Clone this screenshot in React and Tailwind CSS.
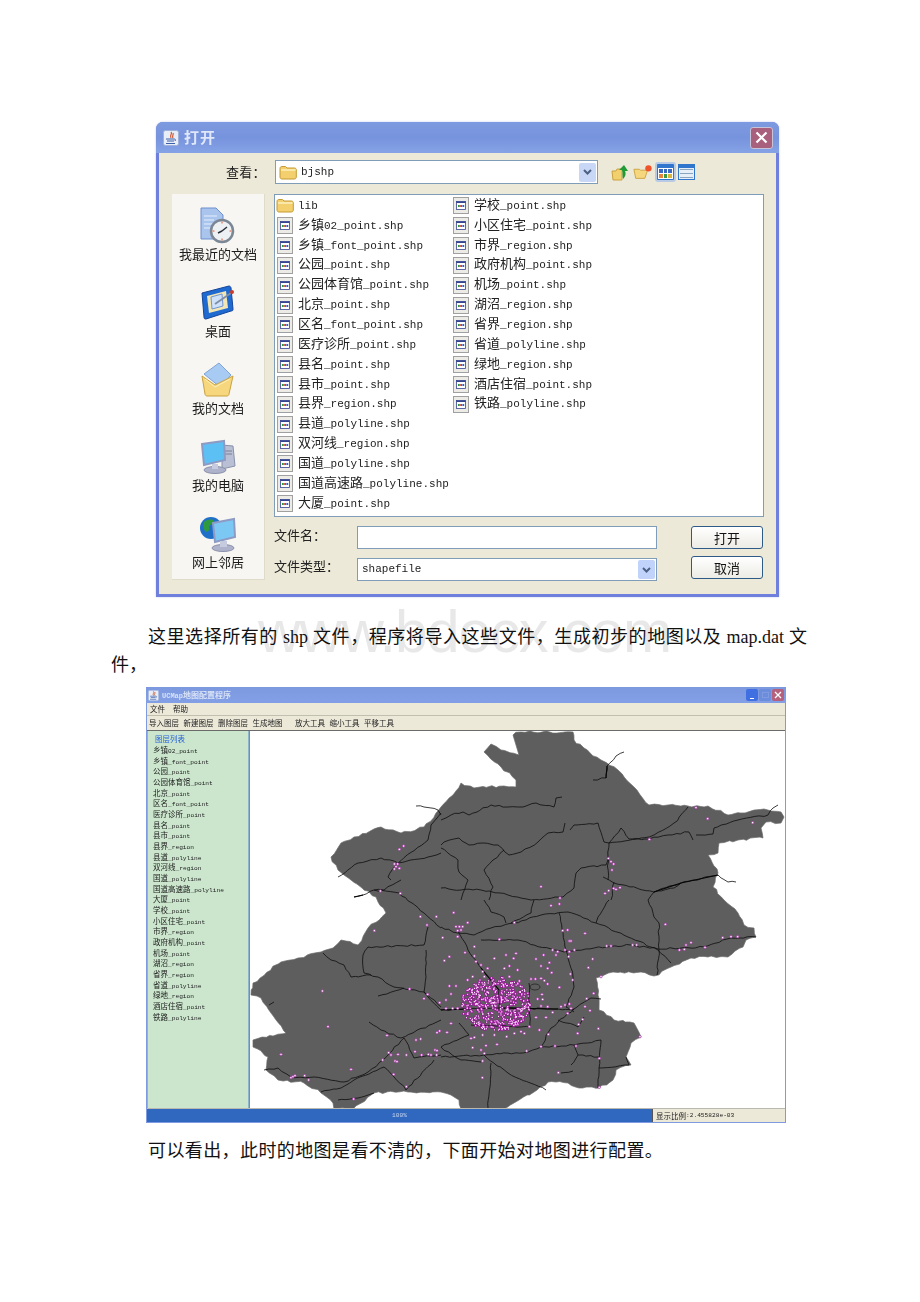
import React from 'react'

const leftFiles = ['乡镇02_point.shp', '乡镇_font_point.shp', '公园_point.shp', '公园体育馆_point.shp', '北京_point.shp', '区名_font_point.shp', '医疗诊所_point.shp', '县名_point.shp', '县市_point.shp', '县界_region.shp', '县道_polyline.shp', '双河线_region.shp', '国道_polyline.shp', '国道高速路_polyline.shp', '大厦_point.shp']
const rightFiles = ['学校_point.shp', '小区住宅_point.shp', '市界_region.shp', '政府机构_point.shp', '机场_point.shp', '湖沼_region.shp', '省界_region.shp', '省道_polyline.shp', '绿地_region.shp', '酒店住宿_point.shp', '铁路_polyline.shp']
const layers = ['乡镇02_point', '乡镇_font_point', '公园_point', '公园体育馆_point', '北京_point', '区名_font_point', '医疗诊所_point', '县名_point', '县市_point', '县界_region', '县道_polyline', '双河线_region', '国道_polyline', '国道高速路_polyline', '大厦_point', '学校_point', '小区住宅_point', '市界_region', '政府机构_point', '机场_point', '湖沼_region', '省界_region', '省道_polyline', '绿地_region', '酒店住宿_point', '铁路_polyline']

// small seeded generator so the map is the same on every load
let seed = 12345
const rand = () => {
  seed = (seed * 1664525 + 1013904223) % 4294967296
  return seed / 4294967296
}

// breaks long straight segments up so borders and roads look hand digitised
const roughen = (points, amp, step) => {
  const pts = points.split(' ').map((p) => p.split(',').map(Number))
  const out = []
  pts.forEach(([x, y], i) => {
    out.push(`${x},${y}`)
    const next = pts[i + 1]
    if (!next) return
    const n = Math.floor(Math.hypot(next[0] - x, next[1] - y) / step)
    for (let k = 1; k < n; k++) {
      const t = k / n
      const px = x + (next[0] - x) * t + (rand() - 0.5) * amp
      const py = y + (next[1] - y) * t + (rand() - 0.5) * amp
      out.push(`${px.toFixed(1)},${py.toFixed(1)}`)
    }
  })
  return out.join(' ')
}

// map outline, page coordinates
const outline = roughen('512,735 520,732 572,732 573,740 583,748 600,760 617,770 633,787 648,805 667,805 687,806 707,806 727,815 740,813 763,809 780,812 783,817 780,823 765,822 760,828 762,838 737,840 718,843 717,853 707,855 717,873 712,887 723,900 737,913 743,925 753,928 755,937 745,940 742,947 727,957 707,957 690,958 670,967 653,976 640,972 612,972 595,978 597,995 598,1010 613,1020 633,1023 640,1037 630,1043 625,1057 630,1065 615,1070 612,1080 598,1088 578,1088 567,1083 547,1082 533,1092 518,1100 502,1109 460,1109 458,1100 450,1095 440,1092 407,1092 373,1093 352,1109 333,1109 332,1103 320,1093 303,1083 277,1080 265,1070 267,1057 252,1047 252,1040 285,1033 273,1017 260,998 250,995 252,983 280,962 297,958 320,952 332,948 340,940 357,945 367,928 385,913 375,897 350,880 337,870 330,857 340,843 353,837 380,827 400,833 423,827 440,807 452,795 460,783 473,788 503,786 515,787 515,780 500,767 483,752 490,744 500,750 518,755', 2.4, 4)

const roads = [
  '440,820 450,815 462,812 468,815 490,805 507,807 522,807 535,803 553,807 555,798 561,797',
  '564,823 562,832 547,833 537,842 520,852 508,855 497,845 482,843 468,845 458,838 443,842 440,845',
  '569,830 573,825 597,823 603,842 608,843 607,857 607,880',
  '608,843 620,828 628,839 648,839 667,835 688,832 692,840',
  '608,843 640,838 653,835 673,823 687,807',
  '695,835 712,834 713,828 737,820 767,815 772,808 777,805',
  '592,780 605,778 606,766 615,756 623,752',
  '440,848 457,860 458,872 467,880 462,893 460,900',
  '503,850 492,860 483,870 492,887 488,900',
  '607,857 605,865 580,868 575,873 573,888 562,897 530,900',
  '602,877 613,883 653,892 680,883 717,875 727,882 735,882',
  '647,900 653,892 673,888 680,883',
  '613,882 610,900',
  '440,888 460,890 480,890 507,895 530,900',
  '440,927 457,933 473,935 490,928 513,923 540,915 567,912 595,923 627,937 657,950 670,963',
  '480,940 517,940 533,945 563,952 593,948 630,945 657,949 703,947 730,938 755,937',
  '558,913 565,950 572,977 573,987 565,1007 573,1012',
  '595,923 597,917 608,900',
  '647,900 653,917 658,923 658,950 656,975',
  '440,1010 497,1008 557,1009 573,1009 590,998 600,999',
  '573,1009 550,1028 540,1047 527,1052 483,1055 440,1057',
  '457,930 467,950 480,968 498,990 498,1010',
  '483,1055 507,1073 545,1090',
  '490,1063 487,1108',
  '600,1040 573,1045 540,1047',
  '600,1040 598,1068 597,1088',
  '598,1068 628,1065 625,1057',
  '577,1055 598,1057',
  '573,1045 577,1055 570,1065',
  '557,1020 577,1027 583,1017',
  '458,1023 468,1035 440,1047 460,1060 480,1062',
  '528,983 529,1027 470,1025',
  '560,1073 572,1071',
  '483,900 490,912 503,917 505,923',
  '533,900 530,913 510,923',
  '353,897 362,895 373,890 398,893 423,913 440,928',
  '400,880 383,890 373,890',
  '427,927 423,945 367,947 362,955 363,973 377,977 393,987 423,992 440,1007',
  '322,953 330,960 343,965 350,977 370,975',
  '377,996 403,988',
  '425,950 425,977 423,992 427,997 440,1010',
  '263,1070 277,1068 290,1077 313,1077 343,1082 367,1072 382,1060 403,1038 413,1058 440,1055',
  '368,1022 380,1030 400,1038 440,1020',
  '320,1092 340,1088 353,1080 383,1067 393,1077 405,1090 433,1060',
  '337,1100 357,1098 373,1093',
  '268,1005 273,1002',
  '337,877 357,863 380,858 397,863 427,857 440,853',
  '397,863 427,840 430,825 440,813',
  '397,863 387,877 390,880',
  '415,806 423,807 437,810 440,815',
].map((r) => roughen(r, 1.6, 4))
const thickRoads = ['353,897 362,895', '440,1010 470,1009', '498,1008 557,1009', '606,766 605,778', '653,892 680,883 717,875', '480,968 498,990']

// hand placed dots, grouped by the crop they were read from
const shift = (dx, dy, pts) => pts.map(([x, y]) => [x / 3 + dx, y / 3 + dy])
const looseDots = [
  ...shift(440, 680, [[765, 383], [800, 416], [935, 428], [625, 478], [502, 535], [510, 545], [518, 552], [513, 570], [300, 620], [357, 654], [492, 640], [503, 632], [518, 625], [525, 628], [537, 623]]),
  ...shift(140, 680, [[775, 508], [788, 498], [760, 552], [770, 552], [765, 560], [775, 565], [760, 567]]),
  ...shift(140, 880, [[718, 33], [778, 40], [838, 110], [886, 110], [858, 135], [700, 152], [544, 333], [561, 440], [738, 466], [825, 480], [839, 477], [420, 523], [630, 568], [743, 518], [750, 525], [771, 523], [796, 525], [822, 515], [842, 525], [862, 523], [870, 525], [882, 510], [888, 512], [887, 525], [762, 543], [768, 545], [725, 540], [758, 583], [796, 620], [638, 657], [450, 593], [456, 590], [462, 587], [491, 587], [503, 600], [849, 356], [860, 343], [896, 368], [888, 458], [896, 453], [806, 327]]),
  ...shift(440, 900, [[38, 38], [80, 68], [45, 80], [55, 80], [65, 80], [50, 92], [60, 90], [50, 110], [5, 113], [175, 118], [220, 68], [330, 17], [355, 12], [673, 73], [365, 92], [380, 90], [432, 100], [385, 123], [390, 123], [845, 113], [870, 110], [890, 110], [750, 128], [735, 135], [730, 148], [715, 150], [792, 142], [575, 135], [587, 135], [497, 138], [510, 138], [335, 150], [350, 155], [372, 150], [385, 155], [400, 150], [383, 170], [345, 165], [100, 140], [72, 158], [100, 168], [10, 182], [25, 170], [195, 165], [225, 160], [160, 175], [218, 175], [285, 177], [308, 165], [455, 177], [442, 203], [105, 185], [120, 195], [190, 205], [205, 198], [230, 210], [300, 198], [325, 188], [320, 205], [332, 218], [388, 222], [395, 240], [270, 237], [283, 237], [300, 235], [310, 242], [320, 252], [355, 262], [480, 230], [458, 280], [437, 296], [303, 283], [290, 297], [305, 298], [300, 318], [320, 320], [335, 337], [360, 320], [372, 315], [385, 312], [390, 325], [380, 340], [432, 320], [447, 332], [425, 358], [413, 373], [472, 386], [410, 400], [315, 352], [285, 352], [295, 390], [265, 380], [322, 403], [300, 440], [342, 438], [405, 438], [257, 453], [135, 437], [120, 450], [130, 460], [125, 483], [95, 443], [168, 433], [197, 410], [160, 405], [125, 405], [100, 412], [90, 415], [220, 400], [250, 400], [240, 395], [475, 475], [352, 518], [124, 533], [475, 562], [597, 410], [30, 370], [18, 397], [15, 300], [45, 258], [25, 258], [30, 282], [80, 240], [140, 205], [125, 215], [130, 230], [95, 230], [205, 230], [235, 243], [15, 325], [35, 325], [50, 325]]),
]

// central urban cluster
const clusterDots = []
for (let i = 0; i < 440; i++) {
  const a = rand() * Math.PI * 2
  const r = Math.sqrt(rand())
  clusterDots.push([495 + Math.cos(a) * r * 35, 1004 + Math.sin(a) * r * 27])
}

function Mixed({ text, latin }) {
  const parts = text.match(/[\x00-\x7f]+|[^\x00-\x7f]+/g)
  return parts.map((p, i) =>
    /^[\x00-\x7f]/.test(p) ? (
      <span key={i} className={latin}>{p}</span>
    ) : (
      <span key={i}>{p}</span>
    )
  )
}

function JavaIcon({ size = 16 }) {
  return (
    <svg width={size} height={size} viewBox="0 0 16 16">
      <rect x="0.5" y="0.5" width="15" height="15" rx="2" fill="#e8eef8" stroke="#9fb0d8" />
      <path d="M8 2c2 2-2 3 0 6M10 3c1 2-1.5 3 0 5" stroke="#d0552b" strokeWidth="1.2" fill="none" />
      <path d="M3 9h8c1 0 2 .5 1 2M4 11h7M3 13.5h9" stroke="#3b5fa8" strokeWidth="1" fill="none" />
    </svg>
  )
}

function FolderIcon() {
  return (
    <svg width="18" height="15" viewBox="0 0 18 15" className="shrink-0">
      <path d="M1 3.5C1 2 2 1.5 3 1.5h3.5L8 3h7.5c1 0 1.8.7 1.8 1.8V12c0 1.2-.8 2-2 2H3c-1.200 0-2-.8-2-2z" fill="#f3cf6d" stroke="#c49a35" />
      <path d="M2 5h14.500" stroke="#fdf0bd" strokeWidth="1.500" />
    </svg>
  )
}

function FileIcon() {
  return (
    <svg width="16" height="17" viewBox="0 0 16 17" className="shrink-0">
      <rect x="0.500" y="0.500" width="15" height="16" fill="#ecebe6" stroke="#a0a0a0" />
      <rect x="3.500" y="4.500" width="9" height="8" fill="#ffffff" stroke="#33458f" strokeWidth="0.800" />
      <rect x="3.500" y="4.500" width="9" height="1.500" fill="#33458f" />
      <rect x="5" y="8" width="1.800" height="2" fill="#2b9a3e" />
      <rect x="7.200" y="8" width="1.800" height="2" fill="#d33a2c" />
      <rect x="9.400" y="8" width="1.800" height="2" fill="#2b5fc9" />
    </svg>
  )
}

function RecentIcon() {
  return (
    <svg width="36" height="38" viewBox="0 0 36 38">
      <path d="M1 1h15l7 7v24H1z" fill="#a9c5ee" stroke="#6d8fce" />
      <path d="M4 9h13M4 13h10M4 17h9M4 21h9" stroke="#e6effb" />
      <circle cx="22" cy="24" r="11" fill="#eef1f4" stroke="#7b8794" strokeWidth="2.500" />
      <path d="M22 24l5-4M22 24l-4 2" stroke="#2a2f38" strokeWidth="1.500" />
      <path d="M22 14.500v2M22 31.500v2M12.500 24h2M29.500 24h2" stroke="#e5562a" />
    </svg>
  )
}

function DesktopIcon() {
  return (
    <svg width="36" height="36" viewBox="0 0 36 36">
      <path d="M2 8l27-7c1 0 2 1 2 2l2 21c0 1 0 2-2 2L6 34c-1 0-2 0-2-2z" fill="#1f6ad0" stroke="#14459b" />
      <path d="M7 11l19-5 2 17-19 5z" fill="#f3e6b5" />
      <path d="M11 12l11-3 1 12-11 3z" fill="#cfe2fa" stroke="#6f95d3" />
      <path d="M15 19l16-11" stroke="#7d8ea8" strokeWidth="1.800" />
      <circle cx="32" cy="7" r="2" fill="#c93a2b" />
    </svg>
  )
}

function DocsIcon() {
  return (
    <svg width="34" height="36" viewBox="0 0 34 36">
      <path d="M3 12L18 1l12 12-11 12z" fill="#a8cbf3" stroke="#7fa4d8" />
      <path d="M1 14l13 9 18-9-4 18c0 1-1 2-2 2H6c-1 0-2-1-2-2z" fill="#f6d77e" stroke="#c9a23f" />
      <path d="M4 17l10 8 15-8" stroke="#fdf0bd" fill="none" />
    </svg>
  )
}

function ComputerIcon() {
  return (
    <svg width="36" height="36" viewBox="0 0 36 36">
      <path d="M22 6l11 1 2 20-13 3z" fill="#b9bfd4" stroke="#8a90aa" />
      <path d="M25 12h7M25 15h7" stroke="#7a8098" />
      <path d="M2 5l22-3 1 19-21 5z" fill="#5dc0f5" stroke="#8d9bc4" strokeWidth="2" />
      <ellipse cx="15" cy="31" rx="11" ry="3.500" fill="#aeb3cb" stroke="#8a90aa" />
      <path d="M12 25h6v5h-6z" fill="#c7cbe0" />
    </svg>
  )
}

function NetworkIcon() {
  return (
    <svg width="36" height="36" viewBox="0 0 36 36">
      <circle cx="11" cy="12" r="11" fill="#1f6fc9" />
      <path d="M4 6c4-3 8-3 10-1-1 4-4 3-5 6 2 3-2 6-4 4-2-3-2-6-1-9zM15 12c3 0 4 3 2 6-2 1-3-3-2-6z" fill="#2f9a3d" />
      <path d="M13 7l21-4 1 18-20 5z" fill="#7bc8f5" stroke="#8d9bc4" strokeWidth="2" />
      <ellipse cx="23" cy="32" rx="11" ry="3.500" fill="#aeb3cb" stroke="#8a90aa" />
      <path d="M20 25h7v6h-7z" fill="#c7cbe0" />
    </svg>
  )
}

function SideItem({ icon, label }) {
  return (
    <div className="h-[77px] flex flex-col items-center pt-[13px]">
      <div className="h-[38px] flex items-center">{icon}</div>
      <div className="mt-[1px] text-[13px] leading-[16px] text-[#1c1c1c]">{label}</div>
    </div>
  )
}

function FileRow({ name }) {
  return (
    <div className="h-[19.850px] flex items-center gap-[5px]">
      <FileIcon />
      <div className="whitespace-nowrap text-[13px] leading-[16px] -mt-[2px] text-[#222222]">
        <Mixed text={name} latin="font-['Liberation_Mono'] text-[11px]" />
      </div>
    </div>
  )
}

function Chevron({ faded }) {
  return (
    <div className={`w-[17px] h-[19px] rounded-[2px] flex items-center justify-center ${faded ? 'bg-[#c1d3fb]' : 'bg-[#c8d7f5]'}`}>
      <svg width="9" height="6" viewBox="0 0 9 6">
        <path d="M1 1l3.500 3.500L8 1" stroke="#4d6185" strokeWidth="2" fill="none" />
      </svg>
    </div>
  )
}

function OpenDialog() {
  return (
    <div className="ml-[156px] w-[623px] h-[475px] rounded-t-[7px] bg-[#6f7fdc] px-[3px] pb-[3px] flex flex-col shadow-[0_0_2px_#b8c0e8] blur-[0.3px]">
      <div className="h-[31px] shrink-0 -mx-[3px] rounded-t-[7px] bg-gradient-to-b from-[#7d9be0] via-[#7693dd] to-[#86a3e6] flex items-center pl-[7px] pr-[6px] gap-[5px]">
        <JavaIcon size={16} />
        <div className="text-[15px] font-bold text-[#dfe7f8] tracking-[1px]">打开</div>
        <div className="ml-auto w-[23px] h-[22px] rounded-[3px] border border-[#c7c3d8] bg-[#a8607c] flex items-center justify-center">
          <svg width="13" height="13" viewBox="0 0 13 13">
            <path d="M1.500 1.500l10 10M11.500 1.500l-10 10" stroke="#ffffff" strokeWidth="2.200" />
          </svg>
        </div>
      </div>

      <div className="flex-1 bg-[#ece9d8] px-[12px] pt-[7px] text-[#222222]">
        <div className="flex items-center h-[24px]">
          <div className="w-[104px] pl-[55px] text-[13px] tracking-[0.300px] whitespace-nowrap">查看：</div>
          <div className="w-[323px] h-[24px] bg-white border border-[#7f9db9] flex items-center pl-[3px] pr-[1px]">
            <FolderIcon />
            <span className="ml-[4px] font-['Liberation_Mono'] text-[11px]">bjshp</span>
            <div className="ml-auto"><Chevron /></div>
          </div>
          <div className="ml-[13px] flex items-center gap-[2px]">
            <svg width="20" height="19" viewBox="0 0 20 19">
              <path d="M1 8h4l1-2h5v11H2z" fill="#f3d06e" stroke="#c9a23f" />
              <path d="M12 16c3-3 3-6 2-8h3l-4-6-5 5h3c1 3 0 6 1 9z" fill="#1f9a35" />
            </svg>
            <svg width="20" height="18" viewBox="0 0 22 18">
              <path d="M1 6h6l1 1h8l-3 9H3z" fill="#f6d77e" stroke="#c9a23f" />
              <circle cx="17" cy="5" r="3.500" fill="#f0532a" />
            </svg>
            <div className="w-[21px] h-[20px] rounded-[3px] border-2 border-[#b9cbe4] bg-[#2f76cc] flex flex-col p-[1px]">
              <div className="h-[3px]" />
              <div className="flex-1 bg-white grid grid-cols-3 gap-[1px] p-[1px]">
                <div className="bg-[#3b6cc4]" /><div className="bg-[#3b6cc4]" /><div className="bg-[#3b6cc4]" />
                <div className="bg-[#e8853a]" /><div className="bg-[#3a9a4a]" /><div className="bg-[#d9b53a]" />
              </div>
            </div>
            <div className="w-[17px] h-[16px] bg-[#2f76cc] flex flex-col p-[1px]">
              <div className="h-[3px]" />
              <div className="flex-1 bg-[#e6eef8] flex flex-col justify-around px-[1px]">
                <div className="h-px bg-[#8ea3bd]" /><div className="h-px bg-[#8ea3bd]" /><div className="h-px bg-[#8ea3bd]" />
              </div>
            </div>
          </div>
        </div>

        <div className="flex mt-[10px]">
          <div className="w-[93px] h-[386px] ml-[1px] bg-[#f7f6f2] border-r border-b border-[#dedbc9]">
            <SideItem icon={<RecentIcon />} label="我最近的文档" />
            <SideItem icon={<DesktopIcon />} label="桌面" />
            <SideItem icon={<DocsIcon />} label="我的文档" />
            <SideItem icon={<ComputerIcon />} label="我的电脑" />
            <SideItem icon={<NetworkIcon />} label="网上邻居" />
          </div>

          <div className="ml-[9px] w-[490px]">
            <div className="h-[323px] bg-white border border-[#7f9db9] pt-[1px] pl-[2px] flex">
              <div className="w-[176px]">
                <div className="h-[19.850px] flex items-center gap-[4px] -ml-[1px]">
                  <FolderIcon />
                  <span className="font-['Liberation_Mono'] text-[11px]">lib</span>
                </div>
                {leftFiles.map((f) => <FileRow key={f} name={f} />)}
              </div>
              <div>
                {rightFiles.map((f) => <FileRow key={f} name={f} />)}
              </div>
            </div>

            <div className="flex items-center mt-[9px] h-[23px]">
              <div className="w-[83px] text-[13px] whitespace-nowrap -mt-[5px]">文件名：</div>
              <div className="w-[300px] h-[23px] bg-white border border-[#7f9db9]" />
              <button className="ml-[34px] w-[72px] h-[23px] rounded-[3px] border border-[#2e5a88] bg-gradient-to-b from-white to-[#ecebe4] text-[13px] text-[#111111]">打开</button>
            </div>
            <div className="flex items-center mt-[9px] h-[23px]">
              <div className="w-[83px] text-[13px] whitespace-nowrap -mt-[8px]">文件类型：</div>
              <div className="w-[300px] h-[23px] bg-white border border-[#7f9db9] flex items-center pl-[4px] pr-[1px]">
                <span className="font-['Liberation_Mono'] text-[11px]">shapefile</span>
                <div className="ml-auto"><Chevron faded /></div>
              </div>
              <button className="ml-[34px] w-[72px] h-[23px] -mt-[4px] rounded-[3px] border border-[#2e5a88] bg-gradient-to-b from-white to-[#ecebe4] text-[13px] text-[#111111]">取消</button>
            </div>
          </div>
        </div>
      </div>
    </div>
  )
}

function BeijingMap() {
  return (
    <svg viewBox="249 731 536 378" width="536" height="378" className="block">
      <polygon points={outline} fill="#5e5e5e" stroke="#6a6a6a" strokeWidth="0.700" strokeLinejoin="round" />
      <g fill="none" stroke="#0c0c0c" strokeWidth="0.800" strokeLinejoin="round">
        {roads.map((r, i) => <polyline key={i} points={r} />)}
      </g>
      <g fill="none" stroke="#050505" strokeWidth="1.100">
        {thickRoads.map((r) => <polyline key={r} points={r} />)}
      </g>
      <ellipse cx="534" cy="987" rx="5" ry="3" fill="none" stroke="#111111" strokeWidth="0.600" />
      <g fill="#9a129a">
        {clusterDots.map(([x, y], i) => <circle key={i} cx={x} cy={y} r="1.500" />)}
      </g>
      <g fill="#ffe8ff">
        {clusterDots.map(([x, y], i) => <rect key={i} x={x - 0.600} y={y - 0.600} width="1.200" height="1.200" />)}
      </g>
      <g fill="#fff6ff" stroke="#a428a4" strokeWidth="0.700">
        {looseDots.map(([x, y], i) => <circle key={i} cx={x} cy={y} r="1.200" />)}
      </g>
    </svg>
  )
}

const tiny = "font-['Liberation_Mono'] text-[6.200px]"

function ConfigWindow() {
  return (
    <div className="ml-[146px] w-[640px] h-[436px] rounded-t-[3px] bg-[#7f9ae0] pb-px flex flex-col text-[7.500px] text-[#222222] blur-[0.4px]">
      <div className="h-[16px] shrink-0 bg-gradient-to-b from-[#7c98de] to-[#83a0e6] flex items-center pl-[2px] pr-[2px] gap-[3px]">
        <JavaIcon size={11} />
        <div className="text-[#d8e2f6] whitespace-nowrap text-[8px] font-semibold">
          <Mixed text="UCMap地图配置程序" latin="font-['Liberation_Mono'] text-[7px]" />
        </div>
        <div className="ml-auto flex gap-[1px]">
          <div className="w-[12px] h-[12px] rounded-[2px] bg-[#3f6fe0] flex items-end justify-center pb-[2px]">
            <div className="w-[4px] h-[1.500px] bg-white" />
          </div>
          <div className="w-[12px] h-[12px] rounded-[2px] bg-[#6c8cdc] flex items-center justify-center">
            <div className="w-[7px] h-[6px] border border-[#7f9ae0]" />
          </div>
          <div className="w-[12px] h-[12px] rounded-[2px] bg-[#b5607c] flex items-center justify-center">
            <svg width="8" height="8" viewBox="0 0 8 8">
              <path d="M1 1l6 6M7 1l-6 6" stroke="#ffffff" strokeWidth="1.300" />
            </svg>
          </div>
        </div>
      </div>

      <div className="h-[13px] shrink-0 bg-[#ece9d8] border-b border-[#c0bfb0] flex items-center pl-[3px] gap-[8px] mx-px">
        <span>文件</span>
        <span>帮助</span>
      </div>
      <div className="h-[15px] shrink-0 bg-[#ece9d8] border-b border-[#6a6a6a] flex items-center pl-[2px] gap-[4.500px] mx-px">
        <span>导入图层</span>
        <span>新建图层</span>
        <span>删除图层</span>
        <span>生成地图</span>
        <span className="ml-[8px]">放大工具</span>
        <span>缩小工具</span>
        <span>平移工具</span>
      </div>

      <div className="flex-1 flex mx-px min-h-0">
        <div className="w-[102px] shrink-0 bg-[#cbe6cd] border-x border-[#8fb6c8] pl-[5px] pt-[2px]">
          <div className="text-[#2a62d8] pl-[2px] h-[11px] leading-[11px] mb-[1px]">图层列表</div>
          {layers.map((l) => (
            <div key={l} className="h-[10.680px] leading-[10.680px] whitespace-nowrap">
              <Mixed text={l} latin={tiny} />
            </div>
          ))}
        </div>
        <div className="flex-1 bg-white border-l border-[#8a8a8a] overflow-hidden">
          <BeijingMap />
        </div>
      </div>

      <div className="h-[14px] shrink-0 flex mx-px bg-[#ece9d8] border-t border-[#b9b9b0]">
        <div className="w-[505px] bg-[#3068c0] flex items-center justify-center text-[#c8d6f0]">
          <span className={tiny}>100%</span>
        </div>
        <div className="flex-1 border-l border-[#555555] pl-[3px] flex items-center">
          <Mixed text="显示比例:2.455828e-03" latin={tiny} />
        </div>
      </div>
    </div>
  )
}

export default function App() {
  return (
    <div className="relative w-[920px] h-[1302px] bg-white overflow-hidden pt-[122px] font-['Noto_Sans_CJK_SC',sans-serif]">
      <div className="absolute left-[258px] top-[597px] text-[59px] tracking-[-1px] leading-[70px] text-[#e8e8e8] font-['Liberation_Sans',sans-serif] whitespace-nowrap">
        www.bdocx.com
      </div>

      <div className="relative">
        <OpenDialog />
      </div>

      <p className="relative mt-[26px] ml-[111px] w-[696px] text-[18px] leading-[28px] indent-[37px] text-justify text-[#111111] font-['Liberation_Serif','Noto_Sans_CJK_SC',serif]">
        这里选择所有的 shp 文件，程序将导入这些文件，生成初步的地图以及 map.dat 文件，
      </p>

      <div className="relative mt-[8px]">
        <ConfigWindow />
      </div>

      <p className="relative mt-[14px] ml-[148px] text-[18px] tracking-[0.400px] leading-[28px] text-[#111111] font-['Liberation_Serif','Noto_Sans_CJK_SC',serif]">
        可以看出，此时的地图是看不清的，下面开始对地图进行配置。
      </p>
    </div>
  )
}
